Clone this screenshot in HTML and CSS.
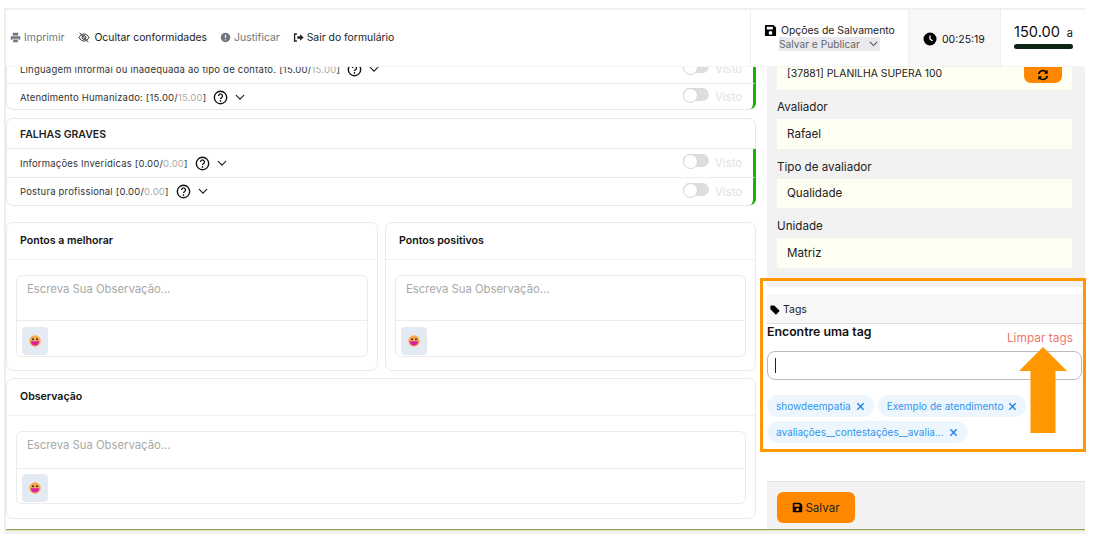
FILE: index.html
```html
<!DOCTYPE html>
<html lang="pt-BR">
<head>
<meta charset="utf-8">
<title>Formulário</title>
<link rel="stylesheet" href="styles.css">
</head>
<body>
<svg class="defs" width="0" height="0" aria-hidden="true">
  <defs>
    <symbol id="ic-help" viewBox="0 0 16 16"><circle cx="8" cy="8" r="6.6" fill="none" stroke="currentColor" stroke-width="1.5"/><path d="M5.9 6.3a2.1 2.1 0 1 1 3.2 1.8c-.7.4-1.1.8-1.1 1.5" fill="none" stroke="currentColor" stroke-width="1.4"/><circle cx="8" cy="11.6" r=".9" fill="currentColor"/></symbol>
    <symbol id="ic-chev" viewBox="0 0 12 8"><path d="M1.5 1.5 6 6l4.5-4.5" fill="none" stroke="currentColor" stroke-width="1.4" stroke-linecap="round"/></symbol>
    <symbol id="ic-save" viewBox="0 0 14 14"><path fill="currentColor" fill-rule="evenodd" d="M2 1h8.2L13 3.8V12a1 1 0 0 1-1 1H2a1 1 0 0 1-1-1V2a1 1 0 0 1 1-1Zm1 2v3h6.5V3H3Zm4 4.6a2 2 0 1 0 0 4 2 2 0 0 0 0-4Z"/></symbol>
    <symbol id="ic-x" viewBox="0 0 10 10"><path d="M1.5 1.5l7 7m0-7-7 7" fill="none" stroke="currentColor" stroke-width="1.5"/></symbol>
    <symbol id="ic-emoji" viewBox="0 0 16 16"><circle cx="8" cy="8" r="6.5" fill="#f9a84b"/><circle cx="5.7" cy="6" r="1.2" fill="#3a2a3a"/><circle cx="10.3" cy="6" r="1.2" fill="#3a2a3a"/><path d="M3.2 8.2h9.6a4.8 5 0 0 1-9.6 0Z" fill="#d81fa8"/></symbol>
  </defs>
</svg>

<div class="frame">
  <header class="topbar">
    <nav class="tools">
      <span class="tool muted"><svg class="ic" viewBox="0 0 14 14"><path fill="currentColor" d="M3.5 1h7v3.500h-7zM1 5.500h12V10h-2V8.500H3V10H1zM4 9.500h6V13H4z"/></svg>Imprimir</span>
      <span class="tool"><svg class="ic ic-wide" viewBox="0 0 16 14"><g fill="none" stroke="currentColor" stroke-width="1.200"><path d="M1.500 7C3.500 3.800 5.700 2.500 8 2.500s4.500 1.300 6.500 4.500c-2 3.200-4.200 4.500-6.500 4.500S3.500 10.200 1.500 7Z"/><circle cx="8" cy="7" r="2.400"/><path d="M2.500 1l11 12"/></g></svg>Ocultar conformidades</span>
      <span class="tool muted"><svg class="ic" viewBox="0 0 14 14"><circle cx="7" cy="7" r="6" fill="currentColor"/><path d="M7 3.500v4.200M7 9.200v1.400" stroke="#fff" stroke-width="1.500"/></svg>Justificar</span>
      <span class="tool"><svg class="ic" viewBox="0 0 14 14"><path d="M5 2.500H2v9h3" fill="none" stroke="currentColor" stroke-width="1.700"/><path fill="currentColor" d="M5.500 5.500H9V2.800L13.500 7 9 11.200V8.500H5.500z"/></svg>Sair do formulário</span>
    </nav>
    <div class="save-options">
      <div class="save-title"><svg class="ic-save"><use href="#ic-save"/></svg>Opções de Salvamento</div>
      <div class="save-select">Salvar e Publicar<svg class="chev-sm"><use href="#ic-chev"/></svg></div>
    </div>
    <div class="timer"><svg class="ic-clock" viewBox="0 0 14 14"><circle cx="7" cy="7" r="6.500" fill="#000"/><path d="M7 3.500V7l2.500 2" fill="none" stroke="#fff" stroke-width="1.300"/></svg>00:25:19</div>
    <div class="score">
      <div class="score-value"><span class="score-num">150.00</span><span class="score-unit">a</span></div>
      <div class="score-bar"></div>
    </div>
  </header>

  <div class="body">
    <main class="form">
      <section class="card card-clipped">
        <div class="row row-long">
          <span class="row-label">Linguagem informal ou inadequada ao tipo de contato. <span class="score-txt">[15.00/<i>15.00</i>]</span></span>
          <svg class="ic-help"><use href="#ic-help"/></svg><svg class="chev"><use href="#ic-chev"/></svg>
          <span class="toggle"></span><span class="visto">Visto</span>
        </div>
        <div class="row">
          <span class="row-label">Atendimento Humanizado: <span class="score-txt">[15.00/<i>15.00</i>]</span></span>
          <svg class="ic-help"><use href="#ic-help"/></svg><svg class="chev"><use href="#ic-chev"/></svg>
          <span class="toggle"></span><span class="visto">Visto</span>
        </div>
      </section>

      <section class="card card-graves">
        <h2 class="card-title">FALHAS GRAVES</h2>
        <div class="row">
          <span class="row-label">Informações Inverídicas <span class="score-txt">[0.00/<i>0.00</i>]</span></span>
          <svg class="ic-help"><use href="#ic-help"/></svg><svg class="chev"><use href="#ic-chev"/></svg>
          <span class="toggle"></span><span class="visto">Visto</span>
        </div>
        <div class="row">
          <span class="row-label">Postura profissional <span class="score-txt">[0.00/<i>0.00</i>]</span></span>
          <svg class="ic-help"><use href="#ic-help"/></svg><svg class="chev"><use href="#ic-chev"/></svg>
          <span class="toggle"></span><span class="visto">Visto</span>
        </div>
      </section>

      <div class="notes-grid">
        <section class="note">
          <h3 class="note-title">Pontos a melhorar</h3>
          <div class="editor">
            <div class="editor-text">Escreva Sua Observação...</div>
            <div class="editor-foot"><span class="emoji-btn"><svg class="emoji"><use href="#ic-emoji"/></svg></span></div>
          </div>
        </section>
        <section class="note">
          <h3 class="note-title">Pontos positivos</h3>
          <div class="editor">
            <div class="editor-text">Escreva Sua Observação...</div>
            <div class="editor-foot"><span class="emoji-btn"><svg class="emoji"><use href="#ic-emoji"/></svg></span></div>
          </div>
        </section>
      </div>

      <section class="note note-wide">
        <h3 class="note-title">Observação</h3>
        <div class="editor">
          <div class="editor-text">Escreva Sua Observação...</div>
          <div class="editor-foot"><span class="emoji-btn"><svg class="emoji"><use href="#ic-emoji"/></svg></span></div>
        </div>
      </section>
    </main>

    <aside class="side">
      <div class="fields">
        <div class="field field-first"><span class="plan-name">[37881] PLANILHA SUPERA 100</span>
          <span class="sync"><svg viewBox="0 0 14 14" class="ic-sync"><g fill="none" stroke="#000" stroke-width="1.800"><path d="M2 6a5 5 0 0 1 9-2"/><path d="M12 8a5 5 0 0 1-9 2"/></g><path d="M12.500 1v4.500H8zM1.500 13V8.500H6z"/></svg></span>
        </div>
        <label class="field-label">Avaliador</label>
        <div class="field">Rafael</div>
        <label class="field-label">Tipo de avaliador</label>
        <div class="field">Qualidade</div>
        <label class="field-label">Unidade</label>
        <div class="field">Matriz</div>
      </div>

      <div class="tags-panel">
        <div class="tags-head"><svg class="ic-tag" viewBox="0 0 12 12"><path fill="#000" d="M.5 1.500A1 1 0 0 1 1.500.5h3.600L11 6.400a1 1 0 0 1 0 1.400L7.800 11a1 1 0 0 1-1.400 0L.5 5.100Z"/></svg>Tags</div>
        <div class="tags-title-row">
          <span class="tags-title">Encontre uma tag</span>
          <span class="tags-clear">Limpar tags</span>
        </div>
        <div class="tags-input"><span class="caret"></span></div>
        <div class="chips">
          <span class="chip">showdeempatia<svg class="chip-x"><use href="#ic-x"/></svg></span>
          <span class="chip">Exemplo de atendimento<svg class="chip-x"><use href="#ic-x"/></svg></span>
          <span class="chip">avaliações__contestações__avalia...<svg class="chip-x"><use href="#ic-x"/></svg></span>
        </div>
      </div>

      <div class="side-foot">
        <button class="btn-save" type="button"><svg class="ic-save-btn"><use href="#ic-save"/></svg>Salvar</button>
      </div>
    </aside>
  </div>
  <div class="bottom-line"></div>

  <div class="highlight"></div>
  <svg class="arrow" viewBox="0 0 50 86"><path fill="#ff9800" d="M25 0 49 24H37.500V86H12.500V24H1Z"/></svg>
</div>
</body>
</html>
```
FILE: styles.css
```css
* { box-sizing: border-box; }
html, body { margin: 0; padding: 0; background: #fff; }
body {
  width: 1094px;
  height: 538px;
  overflow: hidden;
  font-family: Inter, "Noto Sans", "Liberation Sans", sans-serif;
  color: #222;
  padding: 8px 9px 0 4px;
}
.defs { position: absolute; }
.frame {
  position: relative;
  width: 1081px;
  height: 526px;
  display: flex;
  flex-direction: column;
  background: #fff;
  border-top: 2px solid #efefef;
  border-left: 2px solid #eee;
}

/* Header */
.topbar {
  flex: 0 0 57px;
  display: flex;
  align-items: stretch;
  background: #fff;
  border-bottom: 1px solid #f4f4f4;
}
.tools {
  flex: 1;
  display: flex;
  align-items: center;
  gap: 13px;
  padding: 0 0 2px 4px;
  font-size: 10.4px;
  color: #222;
}
.tool { display: inline-flex; align-items: center; gap: 3px; white-space: nowrap; }
.tool.muted { color: #6f7680; }
.ic { width: 11px; height: 11px; }
.ic-wide { width: 14px; }
.save-options {
  flex: 0 0 158px;
  border-left: 1px solid #efefef;
  padding: 14px 0 0 13px;
  font-size: 10.4px;
}
.save-title { display: flex; align-items: center; gap: 4px; }
.ic-save { width: 13px; height: 13px; color: #000; }
.save-select {
  display: inline-flex;
  align-items: center;
  margin-left: 15px;
  height: 14px;
  width: 101px;
  background: #e9e9ee;
  color: #666;
  white-space: nowrap;
  font-size: 10.2px;
}
.chev-sm { width: 9px; height: 6px; margin-left: 9px; color: #555; }
.timer {
  flex: 0 0 93px;
  background: #f7f7f8;
  border-left: 1px solid #efefef;
  border-right: 1px solid #efefef;
  display: flex;
  align-items: center;
  gap: 5px;
  padding: 2px 0 0 14px;
  font-size: 10.5px;
  color: #111;
}
.ic-clock { width: 14px; height: 14px; }
.score { flex: 0 0 84px; padding: 13px 0 0 13px; }
.score-value { display: flex; align-items: baseline; justify-content: space-between; width: 59px; color: #111; }
.score-num { font-size: 14.6px; }
.score-unit { font-size: 11px; }
.score-bar { width: 59px; height: 5px; border-radius: 3px; background: #0c2416; margin-top: 3px; }

/* Body */
.body { flex: 1; display: flex; min-height: 0; }
.form {
  flex: 0 0 761px;
  overflow: hidden;
  padding-right: 11px;
  background: #fff;
}
.card {
  border: 1px solid #e6e6e6;
  border-radius: 7px;
  margin-bottom: 8px;
  background: #fff;
}
.card-clipped { margin-top: -12px; border-top: 0; }
.card-graves { margin-bottom: 16px; }
.card-title {
  margin: 0;
  height: 30px;
  line-height: 31px;
  padding-left: 13px;
  font-size: 10.5px;
  font-weight: 600;
  color: #222;
  border-bottom: 1px solid #ececec;
}
.row {
  position: relative;
  display: flex;
  align-items: center;
  height: 28px;
  padding: 0 11px 0 13px;
  font-size: 9.5px;
  color: #333;
  border-right: 3px solid #16b400;
  margin-right: -1px;
}
.row + .row { border-top: 1px solid #ececec; }
.row-label { white-space: nowrap; letter-spacing: .19px; }
.row-long .row-label { letter-spacing: .22px; }
.card-clipped .row:last-child { border-bottom-right-radius: 6px; height: 26px; padding-top: 1px; }
.card-graves .row:last-child { border-bottom-right-radius: 6px; }
.score-txt i { font-style: normal; color: #aaa; }
.ic-help { width: 15px; height: 15px; margin-left: 7px; color: #111; }
.chev { width: 10px; height: 7px; margin-left: 7px; color: #222; }
.toggle {
  position: relative;
  margin-left: auto;
  width: 26px;
  height: 13px;
  margin-top: -5px;
  border-radius: 7px;
  background: #ddd;
}
.toggle::before {
  content: "";
  position: absolute;
  left: 0;
  top: 0;
  width: 13px;
  height: 13px;
  border-radius: 50%;
  background: #fff;
  border: 1px solid #d4d4d4;
}
.visto { margin-left: 6px; width: 27px; font-size: 11.4px; color: #e2e2e2; }

.notes-grid { display: grid; grid-template-columns: 372px 371px; gap: 7px; margin-bottom: 7px; }
.note { border: 1px solid #ebebeb; border-radius: 7px; background: #fff; height: 149px; }
.note-wide { height: 141px; width: 750px; }
.note-title {
  margin: 0;
  height: 37px;
  line-height: 36px;
  padding-left: 13px;
  font-size: 10.6px;
  font-weight: 600;
  color: #111;
  border-bottom: 1px solid #f0f0f0;
}
.editor {
  margin: 15px 9px 0;
  height: 82px;
  border: 1px solid #ebebeb;
  border-radius: 6px;
  display: flex;
  flex-direction: column;
}
.note-wide .editor { height: 73px; }
.editor-text { flex: 1; padding: 6px 10px; font-size: 11.3px; color: #a8a8a8; }
.editor-foot { flex: 0 0 36px; border-top: 1px solid #ededed; padding: 6px 5px 0; }
.note-wide .editor-foot { flex-basis: 35px; padding-top: 5px; }
.emoji-btn {
  display: flex;
  align-items: center;
  justify-content: center;
  width: 26px;
  height: 28px;
  border-radius: 4px;
  background: #e3eaf1;
}
.emoji { width: 14px; height: 14px; }

/* Sidebar */
.side {
  flex: 1;
  display: flex;
  flex-direction: column;
  min-width: 0;
  background: #f2f2f2;
  font-size: 11.6px;
  color: #222;
}
.fields { flex: 0 0 220px; padding: 0 13px 0 10px; }
.field {
  display: flex;
  align-items: center;
  height: 29.5px;
  padding-left: 10px;
  background: #fffef2;
  color: #222;
}
.field-first { height: 23px; justify-content: space-between; padding-right: 10px; align-items: flex-start; }
.plan-name { font-size: 10.4px; line-height: 13px; }
.sync {
  display: flex;
  align-items: center;
  justify-content: center;
  width: 38px;
  height: 16px;
  border-radius: 0 0 7px 7px;
  background: #ff8800;
}
.ic-sync { width: 12px; height: 12px; }
.field-label { display: block; margin: 11px 0 5px; height: 14px; line-height: 14px; }
.field-first + .field-label { margin-top: 10px; }

.tags-panel {
  flex: 0 0 195px;
  background: #fff;
  padding-top: 7px;
  border-bottom: 1px solid #e2e2e2;
}
.tags-head {
  display: flex;
  align-items: center;
  gap: 3px;
  height: 30px;
  padding: 2px 0 0 3px;
  background: #f7f7f7;
  border-bottom: 1px solid #dedede;
  font-size: 10.5px;
}
.ic-tag { width: 10px; height: 10px; }
.tags-title-row { display: flex; justify-content: space-between; height: 27px; padding: 0 12px 0 0; }
.tags-title { font-size: 12.3px; font-weight: 600; color: #111; }
.tags-clear { font-size: 11.9px; color: #f07a68; margin-top: 6px; }
.tags-input {
  display: flex;
  align-items: center;
  width: 315px;
  height: 29px;
  padding-left: 7px;
  background: #fff;
  border: 1px solid #bbb;
  border-radius: 8px;
}
.caret { width: 1px; height: 15px; background: #222; }
.chips { display: flex; flex-wrap: wrap; gap: 4px; padding: 15px 0 0; width: 300px; }
.chip {
  display: inline-flex;
  align-items: center;
  height: 22px;
  padding: 0 9px;
  border-radius: 11px;
  background: #eef6fd;
  color: #2f95ef;
  font-size: 10px;
  white-space: nowrap;
}
.chip-x { width: 9px; height: 9px; margin-left: 5px; color: #1c86e6; }
.side-foot { flex: 1; padding: 10px 0 0 10px; }
.btn-save {
  display: inline-flex;
  align-items: center;
  justify-content: center;
  gap: 2px;
  width: 78px;
  height: 31px;
  border: 0;
  border-radius: 6px;
  background: #ff8800;
  color: #222;
  font: inherit;
  font-size: 11.6px;
}
.ic-save-btn { width: 11px; height: 11px; color: #000; }
.bottom-line {
  flex: 0 0 5px;
  background: #f2f2f2;
  border-top: 1px solid #8f9f6a;
  box-shadow: inset 0 1px 0 #e2eaa6;
}

/* Annotation overlay */
.highlight {
  position: absolute;
  left: 754px;
  top: 268px;
  width: 326px;
  height: 174px;
  border: 3px solid #ff9800;
  pointer-events: none;
}
.arrow {
  position: absolute;
  left: 1012px;
  top: 337px;
  width: 50px;
  height: 86px;
}
```
